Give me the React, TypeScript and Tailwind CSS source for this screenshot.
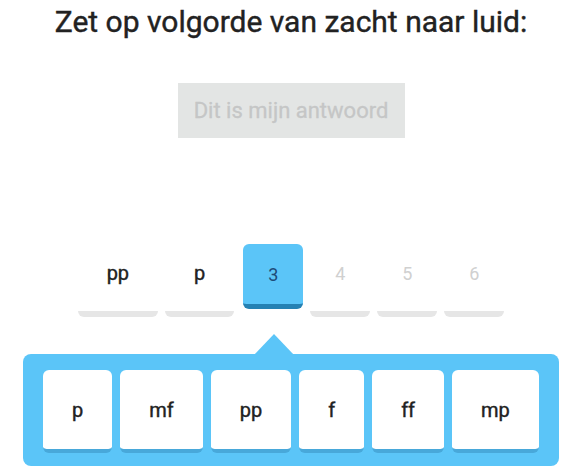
import React from 'react'

const font = { fontFamily: 'Roboto, "Noto Sans", sans-serif' }

export default function App() {
  const filled = ['pp', 'p']
  const empty = ['4', '5', '6']
  const options = ['p', 'mf', 'pp', 'f', 'ff', 'mp']

  return (
    <div className="w-[582px] h-[476px] bg-white flex flex-col items-center text-[#222222]" style={font}>
      <h1 className="mt-[4px] text-[30px] leading-[36px] font-normal whitespace-nowrap [-webkit-text-stroke:0.4px_#222222]">
        Zet op volgorde van zacht naar luid:
      </h1>

      <button className="mt-[43px] w-[227px] h-[55px] bg-[#e3e5e4] text-[#c5c6c6] text-[22px] font-normal flex items-center justify-center [-webkit-text-stroke:0.3px_#c5c6c6]">
        Dit is mijn antwoord
      </button>

      <div className="mt-[106px] flex items-start gap-[7px]">
        {filled.map((s, i) => (
          <div
            key={i}
            className="h-[73px] min-w-[60px] px-[29px] pb-[9px] bg-white border-b-[6px] border-[#e6e6e6] rounded-[6px] flex items-center justify-center text-[20px] font-normal [-webkit-text-stroke:0.4px_#222222]"
          >
            {s}
          </div>
        ))}
        <div className="ml-[2px] h-[65px] w-[60px] bg-[#5bc5f8] border-b-[5px] border-[#2581b3] rounded-[6px] flex items-center justify-center text-[18px] text-[#1e4b78]">
          3
        </div>
        {empty.map((s) => (
          <div
            key={s}
            className="h-[73px] w-[60px] pb-[9px] bg-white border-b-[6px] border-[#e6e6e6] rounded-[6px] flex items-center justify-center text-[18px] text-[#d0d0d0]"
          >
            {s}
          </div>
        ))}
      </div>

      <div className="relative mt-[37px] w-[536px] bg-[#5bc5f8] rounded-[8px] pt-[16px] pb-[13px] px-[20px] flex gap-[8px]">
        <svg className="absolute left-[231px] -top-[20px]" width="40" height="21" viewBox="0 0 40 21">
          <polygon points="0,21 20,0 40,21" fill="#5bc5f8" />
        </svg>
        {options.map((o, i) => (
          <div
            key={i}
            className="h-[83px] px-[29px] bg-white border-b-[4px] border-[#48a8da] rounded-[6px] flex items-center justify-center text-[20px] font-normal [-webkit-text-stroke:0.4px_#222222]"
          >
            {o}
          </div>
        ))}
      </div>
    </div>
  )
}
